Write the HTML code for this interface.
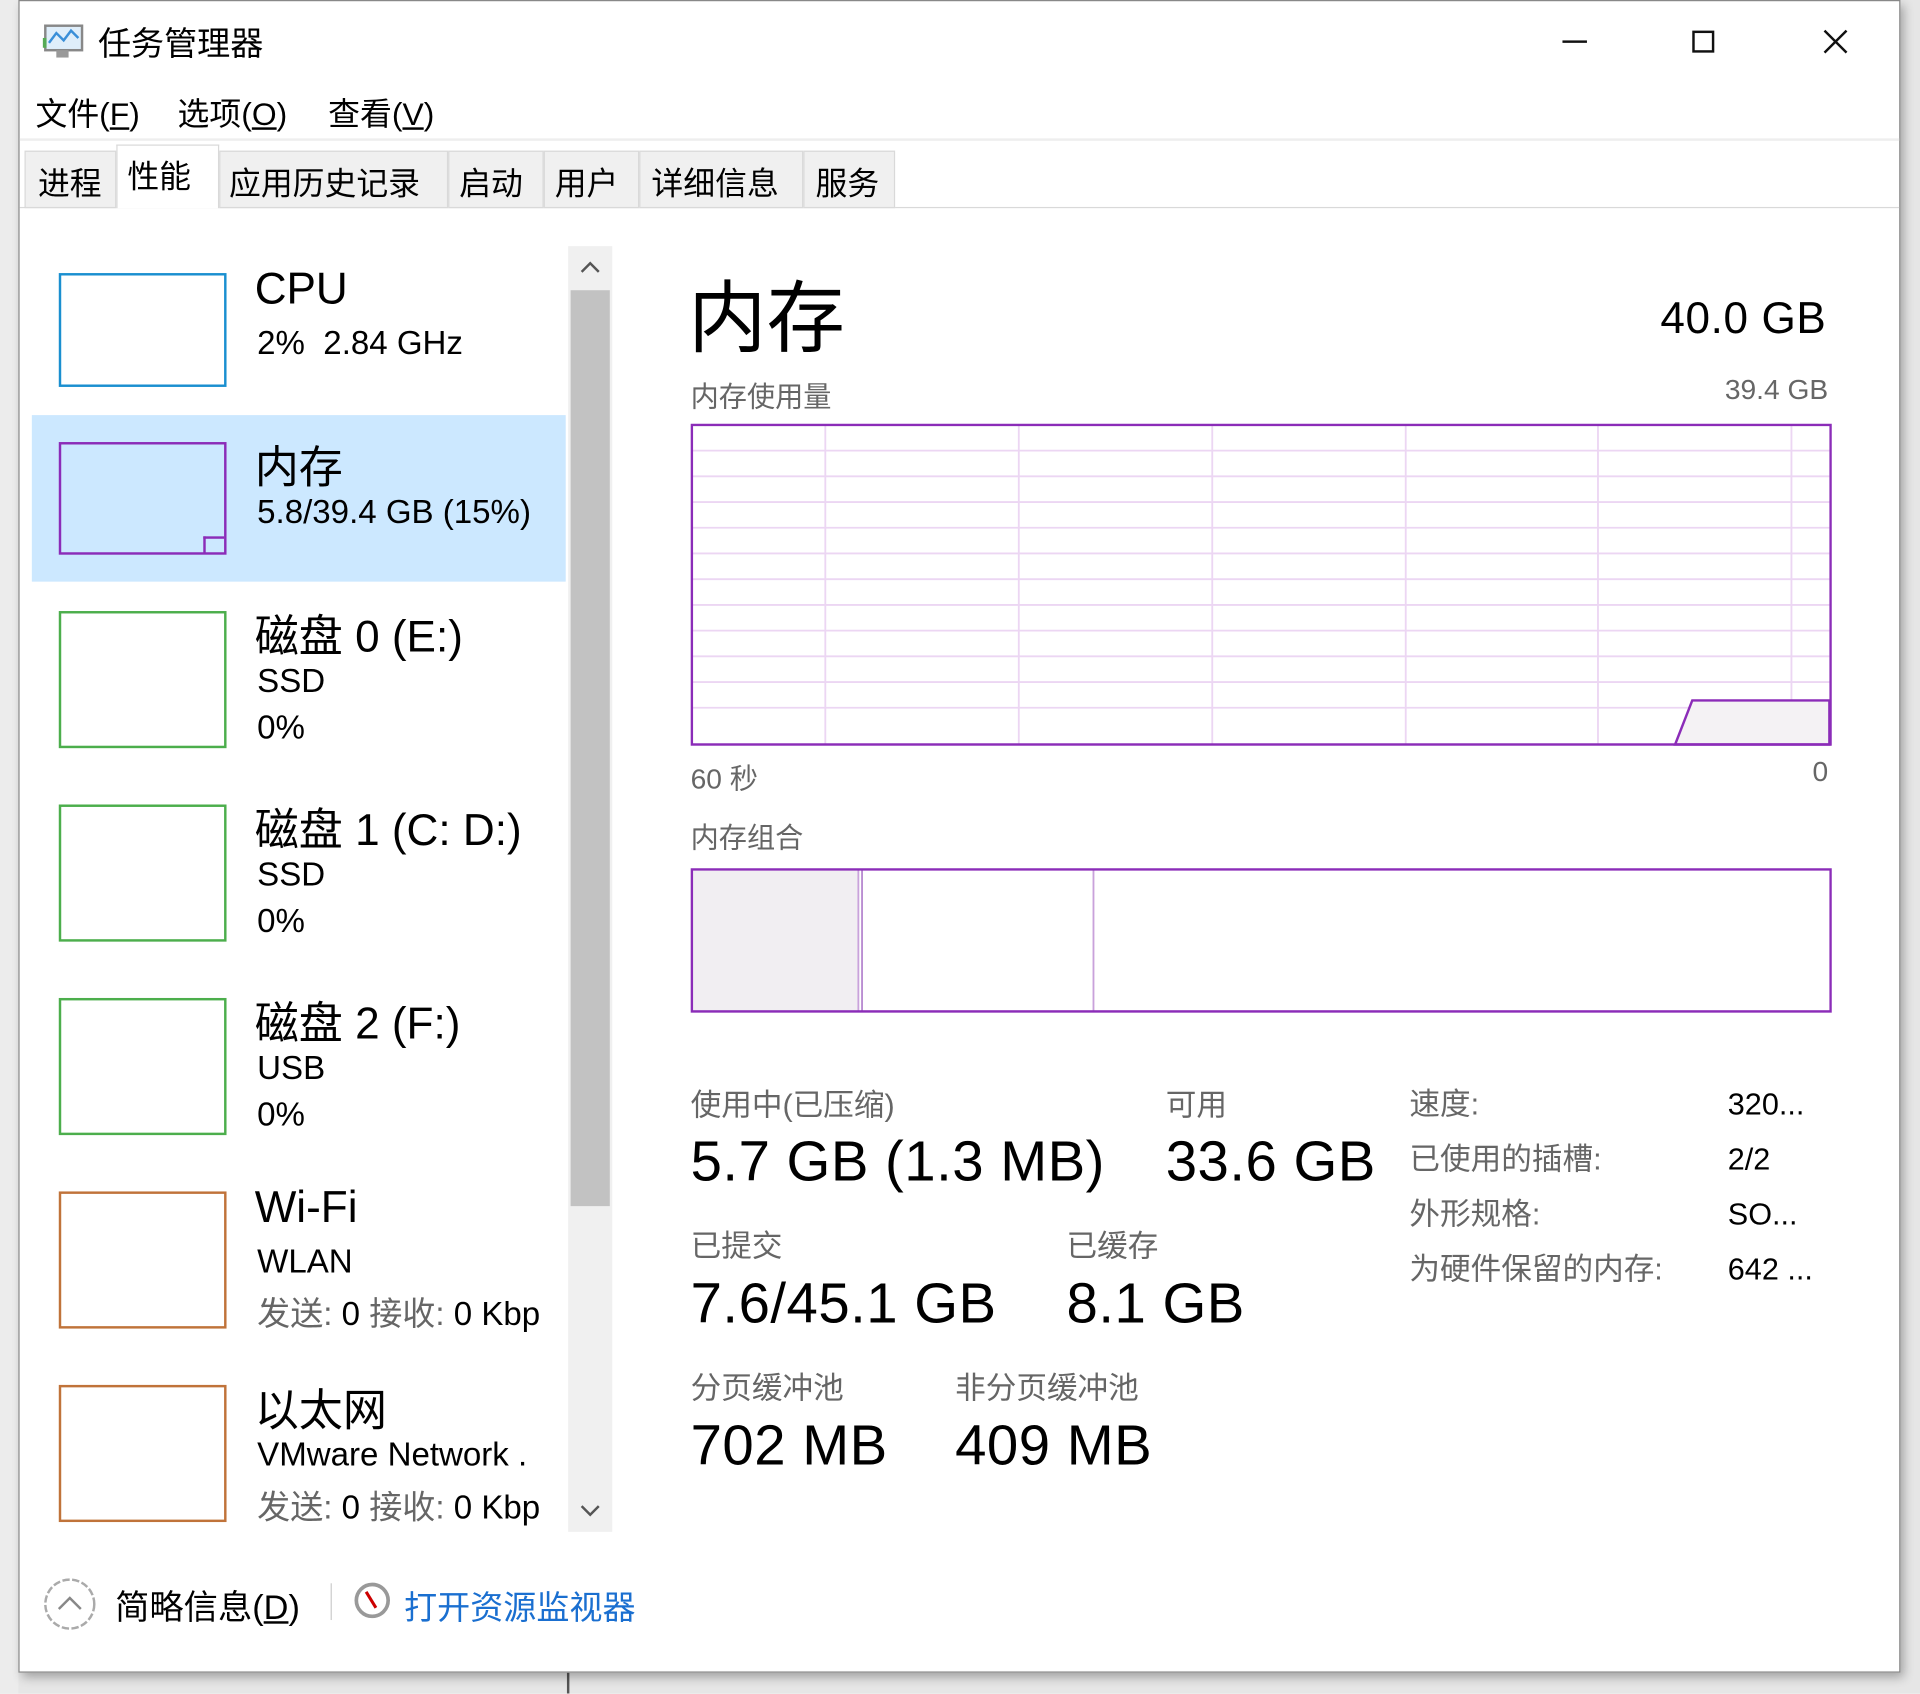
<!DOCTYPE html>
<html><head><meta charset="utf-8">
<style>
*{margin:0;padding:0;box-sizing:border-box}
html,body{width:1920px;height:1694px;overflow:hidden;background:#f0f0f0}
body{font-family:"Liberation Sans","Noto Sans CJK SC",sans-serif;color:#000}
#w{position:absolute;left:0;top:0;width:1568px;height:1383px;transform:scale(1.2245);transform-origin:0 0;background:#e6e6e6}
.a{position:absolute;white-space:nowrap}
#win{position:absolute;left:15px;top:0;width:1537px;height:1366px;background:#fff;border:1px solid #888;box-shadow:3px 4px 8px rgba(0,0,0,.3)}
.g{color:#666}
.box{position:absolute;left:48px;width:137px;border:2px solid}
.big{font-size:46px;letter-spacing:0.4px}
</style></head><body><div id="w">
<div class="a" style="left:0;top:0;width:15px;height:1383px;background:#ececec"></div>
<div class="a" style="left:463px;top:1366px;width:2px;height:17px;background:#555"></div>
<div id="win">
<svg class="a" style="left:18px;top:18px" width="36" height="30"><rect x="3" y="2" width="30" height="20" fill="#dfeefa" stroke="#888" stroke-width="2"/><polyline points="6,16 12,8 18,14 24,6 30,12" fill="none" stroke="#3a8fd8" stroke-width="2"/><rect x="12" y="22" width="10" height="6" fill="#999"/><rect x="1" y="12" width="3" height="8" fill="#5a5"/></svg>
<div class="a" style="left:64px;top:13px;font-size:27px">任务管理器</div>
<div class="a" style="left:1260px;top:32px;width:20px;height:2px;background:#111"></div>
<div class="a" style="left:1366px;top:24px;width:18px;height:18px;border:2px solid #111"></div>
<svg class="a" style="left:1472px;top:22px" width="22" height="22"><path d="M2 2L20 20M20 2L2 20" stroke="#111" stroke-width="2"/></svg>
<div class="a" style="left:13px;top:72px;font-size:26px">文件(<u>F</u>)</div>
<div class="a" style="left:129px;top:72px;font-size:26px">选项(<u>O</u>)</div>
<div class="a" style="left:252px;top:72px;font-size:26px">查看(<u>V</u>)</div>
<div class="a" style="left:0;top:112px;width:1535px;height:2px;background:#eee"></div>
<div class="a" style="left:0;top:168px;width:1535px;height:1px;background:#d9d9d9"></div>
<div class="a" style="left:4px;top:122px;height:47px;display:flex;font-size:26px">
<div style="width:75px;border:1px solid #d9d9d9;background:#f0f0f0;padding:6px 0 0 10px">进程</div>
<div style="width:84px;border:1px solid #d9d9d9;border-bottom:none;background:#fff;margin-top:-5px;height:52px;padding:5px 0 0 8px">性能</div>
<div style="width:187px;border:1px solid #d9d9d9;background:#f0f0f0;padding:6px 0 0 7px">应用历史记录</div>
<div style="width:78px;border:1px solid #d9d9d9;background:#f0f0f0;padding:6px 0 0 8px">启动</div>
<div style="width:78px;border:1px solid #d9d9d9;background:#f0f0f0;padding:6px 0 0 8px">用户</div>
<div style="width:134px;border:1px solid #d9d9d9;background:#f0f0f0;padding:6px 0 0 9px">详细信息</div>
<div style="width:75px;border:1px solid #d9d9d9;background:#f0f0f0;padding:6px 0 0 9px">服务</div>
</div>
<div class="a" style="left:10px;top:338px;width:436px;height:136px;background:#cce8ff"></div>
<div class="box" style="left:32px;top:222px;height:93px;border-color:#1a8fd0"></div>
<div class="box" style="left:32px;top:360px;height:92px;border-color:#8b2cb8"></div>
<div class="a" style="left:150px;top:437px;width:17px;height:14px;border:2px solid #8b2cb8;border-bottom:none;border-right:none"></div>
<div class="box" style="left:32px;top:498px;height:112px;border-color:#4cae4c"></div>
<div class="box" style="left:32px;top:656px;height:112px;border-color:#4cae4c"></div>
<div class="box" style="left:32px;top:814px;height:112px;border-color:#4cae4c"></div>
<div class="box" style="left:32px;top:972px;height:112px;border-color:#c0733a"></div>
<div class="box" style="left:32px;top:1130px;height:112px;border-color:#c0733a"></div>
<div class="a" style="left:192px;top:214px;font-size:36px">CPU</div>
<div class="a" style="left:194px;top:264px;font-size:27px">2%&nbsp; 2.84 GHz</div>
<div class="a" style="left:192px;top:352px;font-size:36px">内存</div>
<div class="a" style="left:194px;top:402px;font-size:27px">5.8/39.4 GB (15%)</div>
<div class="a" style="left:192px;top:490px;font-size:36px">磁盘 0 (E:)</div>
<div class="a" style="left:194px;top:540px;font-size:27px">SSD</div>
<div class="a" style="left:194px;top:578px;font-size:27px">0%</div>
<div class="a" style="left:192px;top:648px;font-size:36px">磁盘 1 (C: D:)</div>
<div class="a" style="left:194px;top:698px;font-size:27px">SSD</div>
<div class="a" style="left:194px;top:736px;font-size:27px">0%</div>
<div class="a" style="left:192px;top:806px;font-size:36px">磁盘 2 (F:)</div>
<div class="a" style="left:194px;top:856px;font-size:27px">USB</div>
<div class="a" style="left:194px;top:894px;font-size:27px">0%</div>
<div class="a" style="left:192px;top:964px;font-size:36px">Wi-Fi</div>
<div class="a" style="left:194px;top:1014px;font-size:27px">WLAN</div>
<div class="a g" style="left:194px;top:1050px;font-size:27px">发送: <span style="color:#000">0</span> 接收: <span style="color:#000">0 Kbp</span></div>
<div class="a" style="left:192px;top:1122px;font-size:36px">以太网</div>
<div class="a" style="left:194px;top:1172px;font-size:27px">VMware Network .</div>
<div class="a g" style="left:194px;top:1208px;font-size:27px">发送: <span style="color:#000">0</span> 接收: <span style="color:#000">0 Kbp</span></div>
<div class="a" style="left:448px;top:200px;width:36px;height:1050px;background:#f0f0f0"></div>
<div class="a" style="left:450px;top:236px;width:32px;height:748px;background:#c2c2c2"></div>
<svg class="a" style="left:456px;top:210px" width="20" height="14"><path d="M3 11L10 4L17 11" fill="none" stroke="#555" stroke-width="2"/></svg>
<svg class="a" style="left:456px;top:1226px" width="20" height="14"><path d="M3 3L10 10L17 3" fill="none" stroke="#555" stroke-width="2"/></svg>
<div class="a" style="left:546px;top:208px;font-size:64px">内存</div>
<div class="a" style="left:1340px;top:238px;font-size:36px;letter-spacing:0.5px">40.0 GB</div>
<div class="a g" style="left:548px;top:304px;font-size:23px">内存使用量</div>
<div class="a g" style="right:58px;top:304px;font-size:23px">39.4 GB</div>
<svg class="a" style="left:548px;top:345px" width="932" height="264">
<g stroke="#ecd6f3" stroke-width="1.5">
<path d="M1 22H930M1 43H930M1 64H930M1 85H930M1 106H930M1 127H930M1 148H930M1 169H930M1 190H930M1 211H930M1 232H930"/>
<path d="M110 1V262M268 1V262M426 1V262M584 1V262M741 1V262M899 1V262"/>
</g>
<path d="M804 262L818 226H930V262Z" fill="#f4f2f4" stroke="#8b2cb8" stroke-width="2"/>
<rect x="1" y="1" width="930" height="261" fill="none" stroke="#8b2cb8" stroke-width="2"/>
</svg>
<div class="a g" style="left:548px;top:616px;font-size:23px">60 秒</div>
<div class="a g" style="right:58px;top:616px;font-size:23px">0</div>
<div class="a g" style="left:548px;top:664px;font-size:23px">内存组合</div>
<svg class="a" style="left:548px;top:708px" width="932" height="119">
<rect x="1" y="1" width="136" height="116" fill="#f1eef2"/>
<path d="M137 1V117" stroke="#c9a2db" stroke-width="1.5"/>
<path d="M140 1V117" stroke="#b88ad0" stroke-width="1.5"/>
<path d="M329 1V117" stroke="#c9a2db" stroke-width="1.5"/>
<rect x="1" y="1" width="930" height="116" fill="none" stroke="#8b2cb8" stroke-width="2"/>
</svg>
<div class="a g" style="left:548px;top:882px;font-size:25px">使用中(已压缩)</div>
<div class="a big" style="left:548px;top:920px">5.7 GB (1.3 MB)</div>
<div class="a g" style="left:936px;top:882px;font-size:25px">可用</div>
<div class="a big" style="left:936px;top:920px">33.6 GB</div>
<div class="a g" style="left:548px;top:997px;font-size:25px">已提交</div>
<div class="a big" style="left:548px;top:1036px">7.6/45.1 GB</div>
<div class="a g" style="left:855px;top:997px;font-size:25px">已缓存</div>
<div class="a big" style="left:855px;top:1036px">8.1 GB</div>
<div class="a g" style="left:548px;top:1113px;font-size:25px">分页缓冲池</div>
<div class="a big" style="left:548px;top:1152px">702 MB</div>
<div class="a g" style="left:764px;top:1113px;font-size:25px">非分页缓冲池</div>
<div class="a big" style="left:764px;top:1152px">409 MB</div>
<div class="a g" style="left:1135px;top:879px;font-size:25px;line-height:45px">速度:<br>已使用的插槽:<br>外形规格:<br>为硬件保留的内存:</div>
<div class="a" style="left:1395px;top:879px;font-size:25px;line-height:45px">320...<br>2/2<br>SO...<br>642 ...</div>
<svg class="a" style="left:18px;top:1286px" width="46" height="46"><circle cx="23" cy="23" r="20" fill="none" stroke="#aaa" stroke-width="2" stroke-dasharray="6 2"/><path d="M14 27L23 18L32 27" fill="none" stroke="#888" stroke-width="2"/></svg>
<div class="a" style="left:78px;top:1290px;font-size:28px">简略信息(<u>D</u>)</div>
<div class="a" style="left:254px;top:1292px;width:1px;height:30px;background:#ccc"></div>
<svg class="a" style="left:272px;top:1290px" width="32" height="32"><circle cx="16" cy="16" r="13" fill="#fff" stroke="#999" stroke-width="3"/><path d="M11 9L19 22" stroke="#c00" stroke-width="2.5"/></svg>
<div class="a" style="left:314px;top:1290px;font-size:27px;color:#1a6fd0">打开资源监视器</div>
</div>
</div></body></html>
